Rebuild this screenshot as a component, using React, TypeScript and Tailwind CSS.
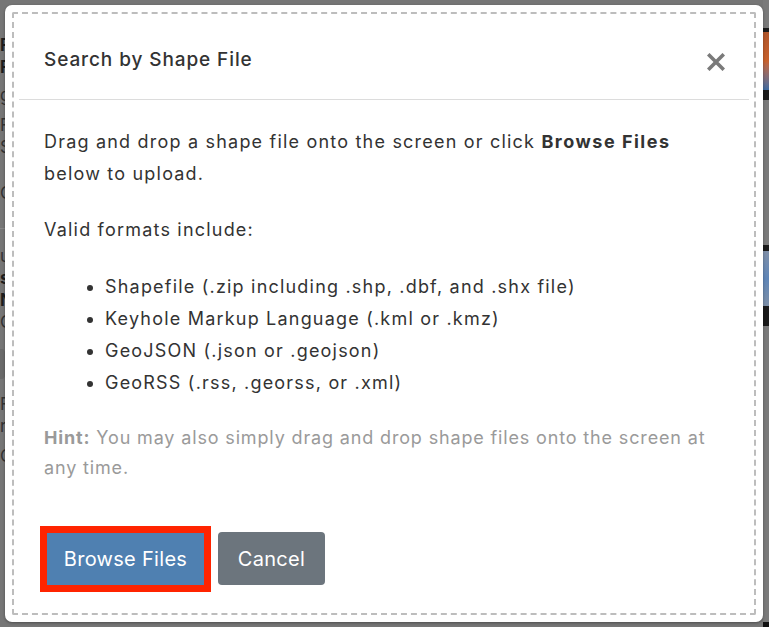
const formats = [
  "Shapefile (.zip including .shp, .dbf, and .shx file)",
  "Keyhole Markup Language (.kml or .kmz)",
  "GeoJSON (.json or .geojson)",
  "GeoRSS (.rss, .georss, or .xml)",
];

const CloseIcon = () => (
  <svg width="18" height="18" viewBox="0 0 18 18" aria-hidden>
    <path
      d="M2.5 2.5 L15.5 15.5 M15.5 2.5 L2.5 15.5"
      stroke="#7a7a7a"
      strokeWidth="3.6"
      strokeLinecap="square"
    />
  </svg>
);

// page behind the backdrop, mostly hidden by the modal
const BackgroundPage = () => (
  <div className="flex h-full w-full justify-between bg-[#767676]">
    <div className="flex w-[5px] flex-col overflow-hidden pt-[34px] text-[17px] leading-[22px] text-[#1e1e1e]">
      <span className="font-bold">R</span>
      <span className="font-bold">F</span>
      <span className="mt-[6px] text-[#333]">g</span>
      <span className="mt-[8px] text-[#333]">F</span>
      <span className="text-[#333]">S</span>
      <span className="mt-[24px] text-[#333]">O</span>
      <div className="mt-[24px] h-px bg-[#888]" />
      <span className="mt-[16px] text-[#333]">u</span>
      <span className="font-bold">s</span>
      <span className="font-bold">N</span>
      <span className="text-[#333]">O</span>
      <div className="mt-[16px] h-[30px] rounded-r bg-[#6a6a6a]" />
      <span className="mt-[14px] text-[#333]">F</span>
      <span className="text-[#333]">r</span>
      <span className="mt-[8px] text-[#333]">O</span>
    </div>
    <div className="flex w-[6px] flex-col">
      <div className="h-[28px] bg-[#7a7a7a]" />
      <div className="h-[4px] bg-[#1a1a1a]" />
      <div className="h-[58px] bg-gradient-to-b from-[#b0552a] via-[#c8612c] to-[#3c6aa0]" />
      <div className="h-[10px] bg-[#1a1a1a]" />
      <div className="h-[145px] bg-[#7a7a7a]" />
      <div className="h-[6px] bg-[#1a1a1a]" />
      <div className="h-[55px] bg-gradient-to-b from-[#7f8fa8] via-[#5f86b8] to-[#7c8ea6]" />
      <div className="h-[20px] bg-[#1a1a1a]" />
      <div className="flex-1 bg-[#7a7a7a]" />
      <div className="h-[5px] bg-[#111]" />
    </div>
  </div>
);

export default function App() {
  return (
    <div
      className="relative h-[627px] w-[769px] overflow-hidden"
      style={{ fontFamily: "Inter, 'Liberation Sans', sans-serif" }}
    >
      <BackgroundPage />

      {/* Modal */}
      <div className="absolute left-[5px] top-[5px] h-[617px] w-[758px] rounded-[7px] bg-white p-[7px] shadow-[0_1px_3px_rgba(0,0,0,0.35)]">
        <div className="flex h-full flex-col rounded-[2px] border-2 border-dashed border-[#bdbdbd] px-[5px]">
          {/* Header */}
          <div className="flex h-[86px] shrink-0 items-center justify-between border-b border-[#dcdcdc] pl-[25px] pr-[24px] pt-[7px]">
            <h2 className="text-[19px] font-medium tracking-[0.9px] text-[#333]">
              Search by Shape File
            </h2>
            <button type="button" className="pt-[3px]">
              <CloseIcon />
            </button>
          </div>

          {/* Body */}
          <div className="flex flex-col px-[25px] pt-[26px] text-[18px] leading-[32px] tracking-[1.2px] text-[#333]">
            <p>
              Drag and drop a shape file onto the screen or click{" "}
              <strong className="font-bold tracking-[1.5px]">Browse Files</strong>{" "}
              below to upload.
            </p>
            <p className="mt-[24px]">Valid formats include:</p>
            <ul className="mt-[25px] list-disc pl-[61px]">
              {formats.map((format) => (
                <li key={format}>{format}</li>
              ))}
            </ul>
            <p className="mt-[24px] leading-[30px] tracking-[0.85px] text-[#9a9a9a]">
              <strong className="font-bold">Hint:</strong> You may also simply
              drag and drop shape files onto the screen at any time.
            </p>

            {/* Actions */}
            <div className="mt-[49px] flex items-center gap-[14px] pl-[3px] tracking-[0.3px]">
              <button
                type="button"
                className="h-[52px] w-[157px] bg-[#4f80b1] text-[20px] text-white outline-[7px] outline-solid outline-[#ff2400]"
              >
                Browse Files
              </button>
              <button
                type="button"
                className="h-[53px] w-[107px] rounded-[4px] bg-[#6c757d] text-[20px] text-white"
              >
                Cancel
              </button>
            </div>
          </div>
        </div>
      </div>
    </div>
  );
}
